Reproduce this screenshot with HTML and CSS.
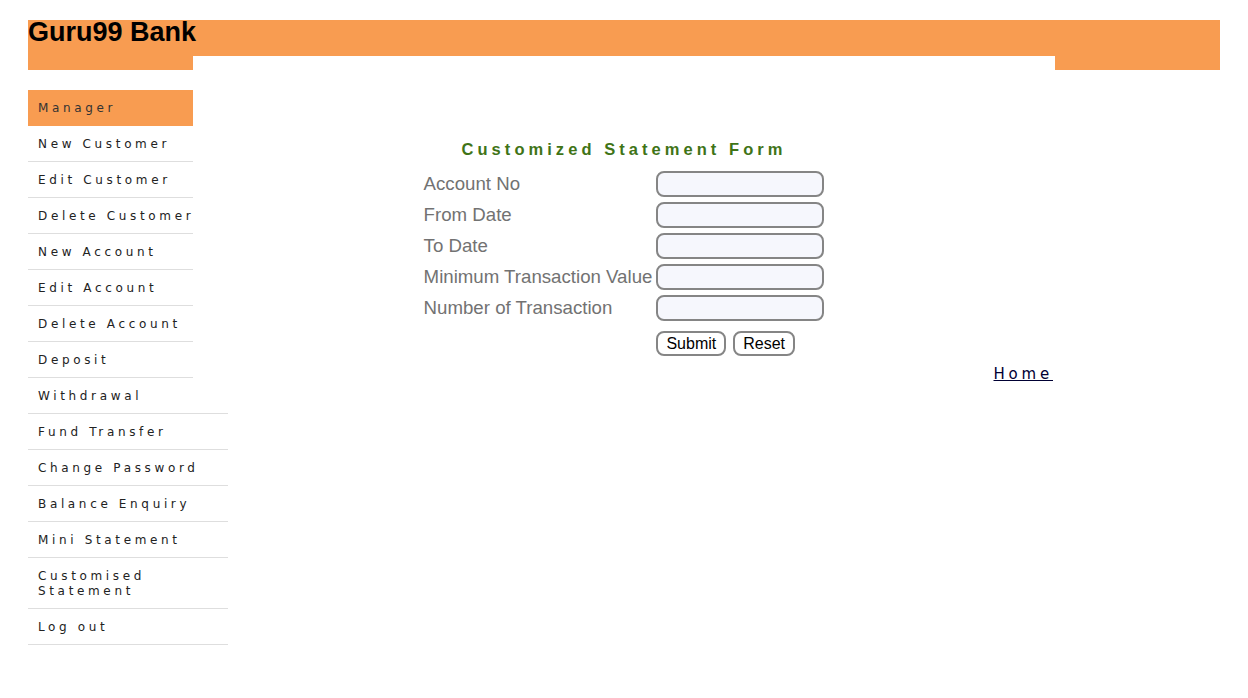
FILE: index.html
```html
<!DOCTYPE html>
<html>
<head>
<meta charset="utf-8">
<title>Guru99 Bank</title>
<link rel="stylesheet" href="styles.css">
</head>
<body>
<div class="page">
  <header class="header">
    <h1 class="brand">Guru99 Bank</h1>
    <div class="header-bottom">
      <div class="hb-left"></div>
      <div class="hb-mid"></div>
      <div class="hb-right"></div>
    </div>
  </header>
  <div class="layout">
    <nav class="menu">
      <div class="menu-item active">Manager</div>
      <div class="menu-item">New Customer</div>
      <div class="menu-item">Edit Customer</div>
      <div class="menu-item">Delete Customer</div>
      <div class="menu-item">New Account</div>
      <div class="menu-item">Edit Account</div>
      <div class="menu-item">Delete Account</div>
      <div class="menu-item">Deposit</div>
      <div class="menu-item wide">Withdrawal</div>
      <div class="menu-item wide">Fund Transfer</div>
      <div class="menu-item wide">Change Password</div>
      <div class="menu-item wide">Balance Enquiry</div>
      <div class="menu-item wide">Mini Statement</div>
      <div class="menu-item wide wrap">Customised Statement</div>
      <div class="menu-item wide">Log out</div>
    </nav>
    <main class="main">
      <p class="form-title">Customized Statement Form</p>
      <form class="form-grid">
        <label class="label">Account No</label>
        <input class="field" type="text">
        <label class="label">From Date</label>
        <input class="field" type="text">
        <label class="label">To Date</label>
        <input class="field" type="text">
        <label class="label">Minimum Transaction Value</label>
        <input class="field" type="text">
        <label class="label">Number of Transaction</label>
        <input class="field" type="text">
        <span></span>
        <div class="buttons">
          <button type="button" class="btn">Submit</button>
          <button type="button" class="btn">Reset</button>
        </div>
      </form>
      <a class="home" href="#">Home</a>
    </main>
  </div>
</div>
</body>
</html>
```

FILE: styles.css
```css
html, body {
  margin: 0;
  padding: 0;
  background: #ffffff;
}

.page {
  padding: 20px 28px 0;
  font-family: "Liberation Sans", Arial, sans-serif;
}

.header {
  background: #f89c51;
}

.brand {
  margin: 0;
  height: 36px;
  font-size: 27px;
  line-height: 24px;
  font-weight: bold;
  color: #000;
}

.header-bottom {
  display: flex;
  height: 14px;
}

.hb-left {
  width: 165px;
}

.hb-mid {
  width: 862px;
  background: #ffffff;
}

.hb-right {
  flex: 1;
}

.layout {
  display: flex;
  margin-top: 20px;
}

.menu {
  width: 165px;
  flex-shrink: 0;
}

.menu-item {
  box-sizing: border-box;
  width: 165px;
  padding: 11px 0 9px 10px;
  font-family: "DejaVu Sans", sans-serif;
  font-size: 12px;
  line-height: 15px;
  letter-spacing: 3.65px;
  color: #222;
  border-bottom: 1px solid #dedede;
  white-space: nowrap;
}

.menu-item.active {
  background: #f89c51;
  border-bottom: none;
  padding-bottom: 10px;
  color: #333;
}

.menu-item.wide {
  width: 200px;
}

.menu-item.wrap {
  white-space: normal;
}

.main {
  width: 862px;
  display: flex;
  flex-direction: column;
  align-items: center;
  padding-top: 49px;
}

.form-title {
  margin: 0;
  font-size: 16.5px;
  line-height: 20px;
  font-weight: bold;
  letter-spacing: 4.05px;
  color: #3f7417;
}

.form-grid {
  display: grid;
  grid-template-columns: auto 168px;
  column-gap: 4px;
  row-gap: 5px;
  align-items: center;
  margin: 12px 0 0;
}

.label {
  font-size: 18.67px;
  line-height: 22px;
  color: #727272;
  white-space: nowrap;
}

.field {
  box-sizing: border-box;
  width: 168px;
  height: 26px;
  margin: 0;
  border: 2px solid #858585;
  border-radius: 8px;
  background: #f6f7fd;
  outline: none;
}

.buttons {
  display: flex;
  gap: 7px;
  margin-top: 5px;
}

.btn {
  box-sizing: border-box;
  height: 25px;
  padding: 0 8px;
  border: 2px solid #858585;
  border-radius: 8px;
  background: #ffffff;
  font-family: "Liberation Sans", Arial, sans-serif;
  font-size: 16px;
  color: #000;
}

.home {
  align-self: flex-end;
  margin-top: 9px;
  margin-right: 2px;
  font-family: "DejaVu Sans", sans-serif;
  font-size: 15px;
  line-height: 18px;
  letter-spacing: 3.8px;
  color: #000033;
  text-decoration: underline;
}
```
